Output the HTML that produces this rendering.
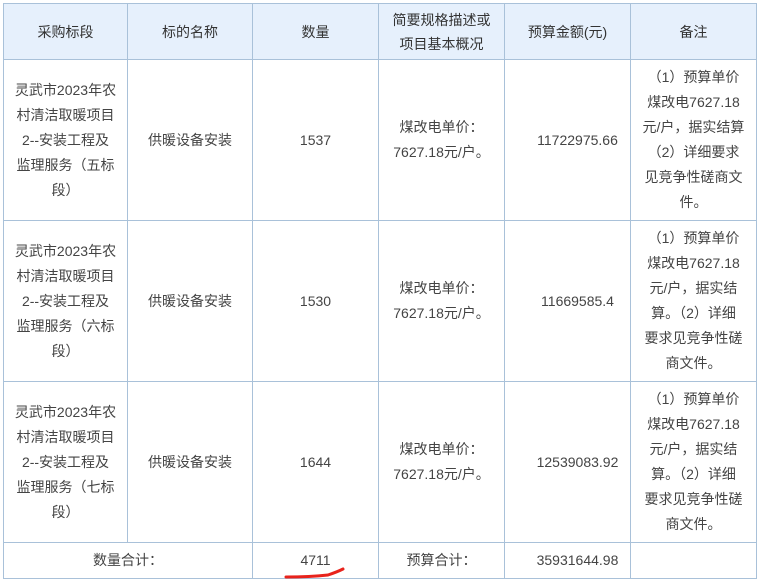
<!DOCTYPE html>
<html><head><meta charset="utf-8"><style>
body{margin:0;background:#fff;width:760px;height:583px;overflow:hidden;position:relative}
table{position:absolute;left:3px;top:3px;border-collapse:collapse;table-layout:fixed;font-family:"Liberation Sans","Noto Sans CJK SC",sans-serif;font-size:14px;color:#444;}
td{border:1px solid #a9c1d9;padding:0;text-align:center;vertical-align:middle;line-height:25px;white-space:nowrap}
td.m{padding-left:20px}
tr.h td{background:#e6f0fc;color:#333;height:55px;line-height:24px}
tr.r td{height:160px}
tr.f td{height:35px}
</style></head><body>
<table>
<colgroup><col style="width:124px"><col style="width:125px"><col style="width:126px"><col style="width:126px"><col style="width:126px"><col style="width:126px"></colgroup>
<tr class="h"><td>采购标段</td><td>标的名称</td><td>数量</td><td>简要规格描述或<br>项目基本概况</td><td>预算金额(元)</td><td>备注</td></tr>
<tr class="r"><td>灵武市2023年农<br>村清洁取暖项目<br>2--安装工程及<br>监理服务（五标<br>段）</td><td>供暖设备安装</td><td>1537</td><td>煤改电单价：<br>7627.18元/户。</td><td class="m">11722975.66</td><td>（1）预算单价<br>煤改电7627.18<br>元/户，据实结算<br>（2）详细要求<br>见竞争性磋商文<br>件。</td></tr>
<tr class="r"><td>灵武市2023年农<br>村清洁取暖项目<br>2--安装工程及<br>监理服务（六标<br>段）</td><td>供暖设备安装</td><td>1530</td><td>煤改电单价：<br>7627.18元/户。</td><td class="m">11669585.4</td><td>（1）预算单价<br>煤改电7627.18<br>元/户，据实结<br>算。（2）详细<br>要求见竞争性磋<br>商文件。</td></tr>
<tr class="r"><td>灵武市2023年农<br>村清洁取暖项目<br>2--安装工程及<br>监理服务（七标<br>段）</td><td>供暖设备安装</td><td>1644</td><td>煤改电单价：<br>7627.18元/户。</td><td class="m">12539083.92</td><td>（1）预算单价<br>煤改电7627.18<br>元/户，据实结<br>算。（2）详细<br>要求见竞争性磋<br>商文件。</td></tr>
<tr class="f"><td colspan="2">数量合计：</td><td>4711</td><td>预算合计：</td><td class="m">35931644.98</td><td></td></tr>
</table>
<svg style="position:absolute;left:0;top:0" width="760" height="583"><path d="M286 577 Q310 577 328 575 Q337 572 343 569" stroke="#e8231c" stroke-width="3" fill="none" stroke-linecap="round"/></svg>
</body></html>
